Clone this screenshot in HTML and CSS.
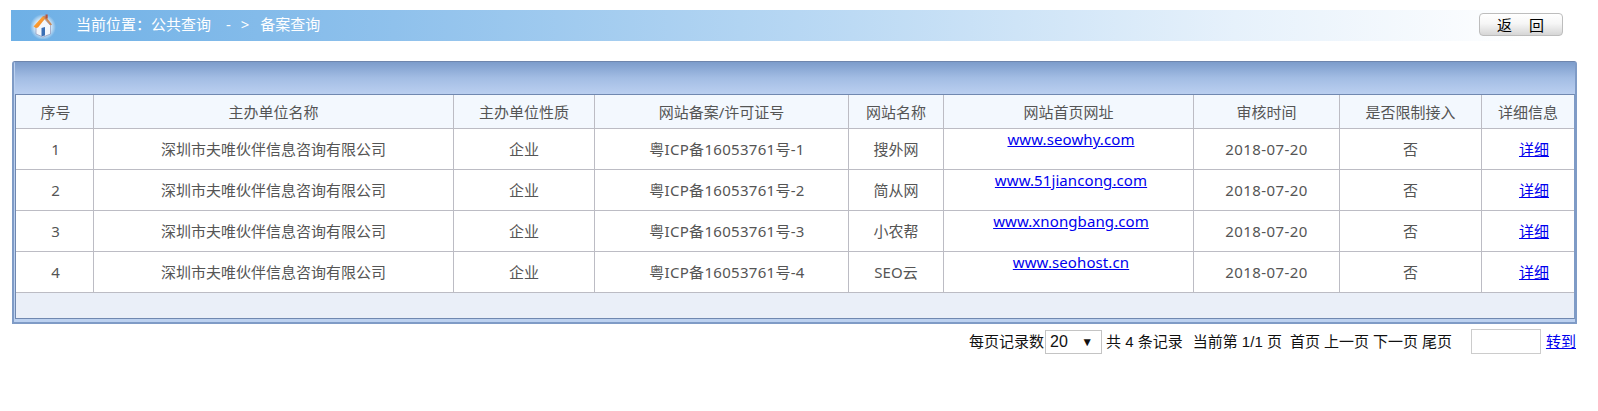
FILE: index.html
```html
<!DOCTYPE html>
<html lang="zh">
<head>
<meta charset="utf-8">
<title>备案查询</title>
<link rel="stylesheet" href="styles.css">
</head>
<body>
<div class="top">
  <div class="crumb">
    <svg class="home" viewBox="0 0 26 26" width="26" height="26">
      <defs>
        <radialGradient id="glow"><stop offset="0.45" stop-color="#ffffff"/><stop offset="1" stop-color="#ffffff" stop-opacity="0"/></radialGradient>
        <linearGradient id="roof" x1="0" y1="0" x2="1" y2="1"><stop offset="0" stop-color="#ffb347"/><stop offset="1" stop-color="#f57f17"/></linearGradient>
      </defs>
      <circle cx="13" cy="14" r="13" fill="url(#glow)"/>
      <path d="M6 13.5 L6 21 L13 24 L20.5 21 L20.5 12.5 L14.5 6 Z" fill="#f3f6fb" stroke="#8b93b8" stroke-width="0.7"/>
      <path d="M3.5 13.5 L12.5 3.5 L15.5 5 L8 14.5 L6 15 Z" fill="url(#roof)"/>
      <path d="M12.5 3.5 L15 2.5 L22 11.5 L20.5 12.5 L14.5 5.5 Z" fill="#c98a5a"/>
      <rect x="15.5" y="1.5" width="2.2" height="4" fill="#b5533c"/>
      <path d="M11.5 15 L15 14 L15 22.5 L11.5 23.2 Z" fill="#3a6fb5"/>
    </svg>
    <span class="crumb-a">当前位置：公共查询</span><span class="crumb-b">- &gt;</span><span class="crumb-c">备案查询</span>
  </div>
  <button class="back" type="button">返　回</button>
</div>

<div class="panel">
  <div class="panel-title"></div>
  <div class="table-wrap">
    <table class="grid">
      <colgroup>
        <col class="c1"><col class="c2"><col class="c3"><col class="c4"><col class="c5"><col class="c6"><col class="c7"><col class="c8"><col class="c9">
      </colgroup>
      <thead>
        <tr><th class="seq">序号</th><th>主办单位名称</th><th>主办单位性质</th><th>网站备案/许可证号</th><th>网站名称</th><th>网站首页网址</th><th>审核时间</th><th>是否限制接入</th><th>详细信息</th></tr>
      </thead>
      <tbody>
        <tr><td class="seq">1</td><td>深圳市夫唯伙伴信息咨询有限公司</td><td>企业</td><td class="icp">粤ICP备16053761号-1</td><td>搜外网</td><td class="url"><a href="#">www.seowhy.com</a></td><td class="date">2018-07-20</td><td>否</td><td class="more"><a href="#">详细</a></td></tr>
        <tr><td class="seq">2</td><td>深圳市夫唯伙伴信息咨询有限公司</td><td>企业</td><td class="icp">粤ICP备16053761号-2</td><td>简从网</td><td class="url"><a href="#">www.51jiancong.com</a></td><td class="date">2018-07-20</td><td>否</td><td class="more"><a href="#">详细</a></td></tr>
        <tr><td class="seq">3</td><td>深圳市夫唯伙伴信息咨询有限公司</td><td>企业</td><td class="icp">粤ICP备16053761号-3</td><td>小农帮</td><td class="url"><a href="#">www.xnongbang.com</a></td><td class="date">2018-07-20</td><td>否</td><td class="more"><a href="#">详细</a></td></tr>
        <tr><td class="seq">4</td><td>深圳市夫唯伙伴信息咨询有限公司</td><td>企业</td><td class="icp">粤ICP备16053761号-4</td><td>SEO云</td><td class="url"><a href="#">www.seohost.cn</a></td><td class="date">2018-07-20</td><td>否</td><td class="more"><a href="#">详细</a></td></tr>
      </tbody>
    </table>
    <div class="table-foot"></div>
  </div>
</div>

<div class="pager">
  <span>每页记录数</span>
  <span class="size-wrap"><select class="size"><option>20</option></select></span>
  <span class="total">共 4 条记录</span>
  <span class="pos">当前第 1/1 页</span>
  <span class="nav">首页</span>
  <span class="nav">上一页</span>
  <span class="nav">下一页</span>
  <span class="nav">尾页</span>
  <input class="jump" type="text">
  <a class="go" href="#">转到</a>
</div>
</body>
</html>
```
FILE: styles.css
```css
* { box-sizing: border-box; }
html, body { margin: 0; padding: 0; background: #fff; }
body {
  font-family: "Noto Sans", "Noto Sans CJK SC", sans-serif;
  font-size: 15px;
  line-height: 20px;
  color: #000;
}
.top {
  display: flex;
  align-items: flex-start;
  padding: 10px 35px 0 11px;
}
.crumb {
  flex: 1;
  height: 31px;
  display: flex;
  align-items: center;
  color: #fff;
  padding-left: 19px;
  background: linear-gradient(90deg, #6eb0e6 0%, #8fc1ec 25%, #bcdaf4 55%, #e6f1fb 80%, #ffffff 100%);
}
.home { flex: none; margin-right: 20px; }
.crumb-b { margin-left: 15px; word-spacing: 4px; letter-spacing: 1px; }
.crumb-c { margin-left: 10px; }
.crumb-a, .crumb-b, .crumb-c { position: relative; top: -2px; }
.back {
  width: 84px;
  height: 23px;
  margin: 3px 0 0 -61px;
  padding: 0;
  position: relative;
  font: 15px/20px "Noto Sans CJK SC", sans-serif;
  color: #000;
  letter-spacing: 1px;
  white-space: pre;
  border: 1px solid #bdbdbd;
  border-radius: 4px;
  background: linear-gradient(180deg, #ffffff 0%, #f6f6f6 45%, #d6d6d6 100%);
}
.panel {
  width: 1565px;
  height: 263px;
  margin: 20px 0 0 12px;
  padding: 0 0 3px 1px;
  border-style: solid;
  border-color: #7f9bc6;
  border-width: 1px 2px 2px 2px;
  border-top-color: #6f86ad;
  border-radius: 3px 3px 0 0;
  background: #bcd1f0;
}
.panel-title {
  height: 32px;
  background: linear-gradient(180deg, #7c9ccb 0%, #a3bde4 50%, #bacff0 100%);
}
.table-wrap {
  border: 1px solid #7088b0;
  border-right-color: #7f9bc6;
  background: #eaeff8;
}
.grid {
  width: 1558px;
  table-layout: fixed;
  border-collapse: separate;
  border-spacing: 0;
  color: #555;
}
.c1 { width: 78px; }
.c2 { width: 360px; }
.c3 { width: 141px; }
.c4 { width: 254px; }
.c5 { width: 95px; }
.c6 { width: 250px; }
.c7 { width: 146px; }
.c8 { width: 142px; }
.c9 { width: 92px; }
.grid th, .grid td {
  padding: 0;
  text-align: center;
  font-weight: 400;
  border-right: 1px solid #bcbcc4;
  border-bottom: 1px solid #bcbcc4;
}
.grid th:last-child, .grid td:last-child { border-right: 0; }
.grid th { height: 34px; background: #f3f8fe; }
.grid td { height: 41px; background: #fff; }
.grid a { color: #00e; }
.grid th.seq, .grid td.seq { padding-left: 2px; }
.grid td.icp { padding-left: 11px; letter-spacing: 0.3px; }
.grid td.date { letter-spacing: 0.4px; }
.grid td.more { padding-left: 12px; }
.grid td.url { vertical-align: top; padding-left: 5px; line-height: 20px; letter-spacing: 0.1px; }
.table-foot { height: 25px; }
.pager {
  display: flex;
  align-items: center;
  height: 25px;
  margin-top: 5px;
  padding-left: 969px;
  font-family: "Liberation Sans", "Noto Sans CJK SC", sans-serif;
  color: #111;
}
.size-wrap {
  position: relative;
  display: block;
  margin: 0 4px 0 1px;
}
.size-wrap::after {
  content: "▼";
  position: absolute;
  right: 9px;
  top: 2px;
  font-size: 12px;
  color: #111;
  pointer-events: none;
}
.size {
  display: block;
  width: 57px;
  height: 24px;
  padding: 0 0 0 4px;
  font: 16px "Liberation Sans", sans-serif;
  color: #111;
  border: 1px solid #c4c4c4;
  background: #fff;
  appearance: none;
}
.total { margin-right: 10px; }
.pos { margin-right: 8px; }
.nav { margin-right: 4px; }
.jump {
  width: 70px;
  height: 25px;
  margin: 0 5px 0 15px;
  border: 1px solid #ccc;
  background: #fff;
}
.go { color: #00e; }
```
